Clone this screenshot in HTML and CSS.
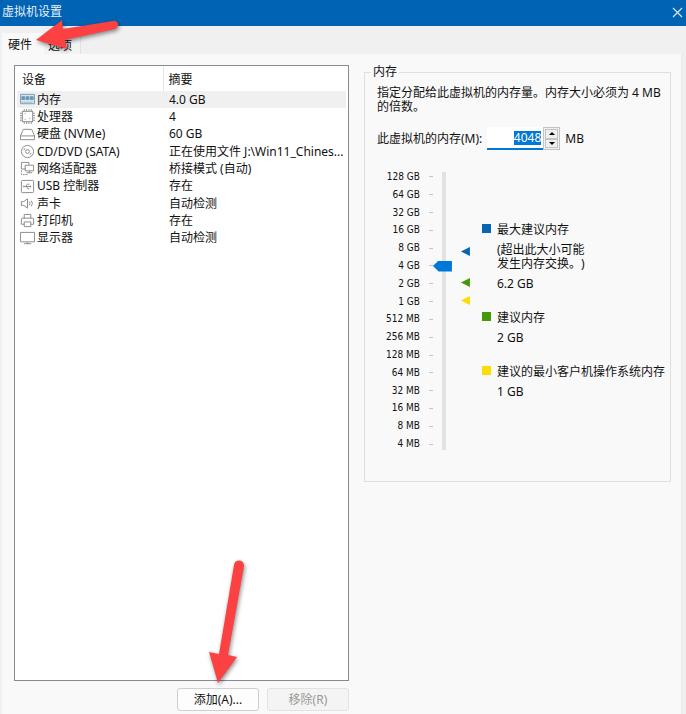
FILE: index.html
```
<!DOCTYPE html>
<html lang="zh-CN">

<head>
    <meta charset="UTF-8">
    <meta name="viewport" content="width=device-width, initial-scale=1.0">
    <title>虚拟机设置</title>
    <link rel="stylesheet" href="styles.css">
</head>

<body>
    <header class="titlebar">
        <h1>虚拟机设置</h1>
        <button class="close" type="button" aria-label="关闭">
            <svg width="11" height="11" viewBox="0 0 11 11"><path d="M1 1l9 9M10 1l-9 9" stroke="#d5e6f5" stroke-width="1.2" fill="none"/></svg>
        </button>
    </header>

    <div class="tabs">
        <button class="tab active" type="button">硬件</button>
        <button class="tab" type="button">选项</button>
        <svg class="arrow arrow-tab" width="90" height="40" viewBox="0 0 90 40">
            <path d="M5 21L31 1L32 10L82 2A4 4 0 0 1 84 10L34 21L36 30Z" fill="#fb4141"/>
        </svg>
    </div>

    <main class="panel">
        <section class="hardware">
            <div class="device-list">
                <table>
                    <thead>
                        <tr><th class="col-device">设备</th><th>摘要</th></tr>
                    </thead>
                    <tbody>
                        <tr class="selected">
                            <td><span class="device"><svg class="icon" viewBox="0 0 16 16"><path d="M.5 2.500h15v10H.5z" fill="#d3e4ef" stroke="#7b9bb0"/><path d="M2 5h3v3H2zM6.500 5h3v3h-3zM11 5h3v3h-3z" fill="#6a95b5" stroke="#6a95b5"/><path d="M2 11h12" stroke="#7b9bb0" stroke-dasharray="1 1"/></svg>内存</span></td>
                            <td>4.0 GB</td>
                        </tr>
                        <tr>
                            <td><span class="device"><svg class="icon" viewBox="0 0 16 16"><rect x="2.500" y="2.500" width="11" height="11"/><path d="M4.500 0v2M7 0v2M9.500 0v2M12 0v2M4.500 14v2M7 14v2M9.500 14v2M12 14v2M0 4.500h2M0 7h2M0 9.500h2M0 12h2M14 4.500h2M14 7h2M14 9.500h2M14 12h2"/><path d="M5 5h1M10 10h1M5 11h1"/></svg>处理器</span></td>
                            <td>4</td>
                        </tr>
                        <tr>
                            <td><span class="device"><svg class="icon" viewBox="0 0 16 16"><path d="M3.500 2.500h9l3 7v4H.5v-4zM.5 9.500h15"/></svg>硬盘 (NVMe)</span></td>
                            <td>60 GB</td>
                        </tr>
                        <tr>
                            <td><span class="device"><svg class="icon" viewBox="0 0 16 16"><circle cx="8" cy="8" r="6.500"/><circle cx="8" cy="8" r="2"/><path d="M4 6.500l1.500-2M12 9.500l-1.500 2"/></svg>CD/DVD (SATA)</span></td>
                            <td>正在使用文件 J:\Win11_Chines...</td>
                        </tr>
                        <tr>
                            <td><span class="device"><svg class="icon" viewBox="0 0 16 16"><path d="M6 8.500H1.500v-7h8V4M5.500 4.500h9v6h-9zM10 10.500v2M7 12.500h6"/><path d="M1.500 10v4.500H8" stroke-dasharray="2 1"/></svg>网络适配器</span></td>
                            <td>桥接模式 (自动)</td>
                        </tr>
                        <tr>
                            <td><span class="device"><svg class="icon" viewBox="0 0 16 16"><rect x="1.500" y="1.500" width="13" height="13" rx="1"/><path d="M4 8h8M6 8l2-2.500h2M7 8l1.500 2.500H10"/><path d="M4 7v2M11 7v2"/></svg>USB 控制器</span></td>
                            <td>存在</td>
                        </tr>
                        <tr>
                            <td><span class="device"><svg class="icon" viewBox="0 0 16 16"><path d="M1.500 6v4h2.500L8 13V3L4 6zM10 6q1.500 2 0 4M12 5q2.500 3 0 6"/></svg>声卡</span></td>
                            <td>自动检测</td>
                        </tr>
                        <tr>
                            <td><span class="device"><svg class="icon" viewBox="0 0 16 16"><path d="M4.500 6V1.500h7V6M4.500 12H1.500V6.500q0-1 1-1h11q1 0 1 1V12h-3M4.500 9.500h7v5h-7z"/></svg>打印机</span></td>
                            <td>存在</td>
                        </tr>
                        <tr>
                            <td><span class="device"><svg class="icon" viewBox="0 0 16 16"><path d="M.5 1.500h15v10H.5zM8 12v2M4 13.500h8"/></svg>显示器</span></td>
                            <td>自动检测</td>
                        </tr>
                    </tbody>
                </table>
            </div>
            <div class="actions">
                <button class="btn" type="button">添加(A)...</button>
                <button class="btn" type="button" disabled>移除(R)</button>
                <svg class="arrow arrow-add" width="50" height="136" viewBox="0 0 50 136">
                    <path d="M14 127L5 96L15 98L30 9A5 5 0 0 1 40 10L24 99L33 101Z" fill="#fb4141"/>
                </svg>
            </div>
        </section>

        <fieldset class="memory">
            <legend>内存</legend>
            <p class="hint">指定分配给此虚拟机的内存量。内存大小必须为 4 MB 的倍数。</p>
            <div class="amount">
                <label for="memory-size">此虚拟机的内存(M):</label>
                <div class="spinner">
                    <input id="memory-size" type="text" value="4048">
                    <div class="spin-buttons">
                        <button type="button" aria-label="增加"><svg width="6" height="3" viewBox="0 0 6 3"><path d="M0 3l3-3 3 3z"/></svg></button>
                        <button type="button" aria-label="减少"><svg width="6" height="3" viewBox="0 0 6 3"><path d="M0 0l3 3 3-3z"/></svg></button>
                    </div>
                </div>
                <span>MB</span>
            </div>

            <div class="sizing">
                <div class="scale">
                    <ul class="ticks">
                        <li>128 GB</li>
                        <li>64 GB</li>
                        <li>32 GB</li>
                        <li>16 GB</li>
                        <li>8 GB</li>
                        <li>4 GB</li>
                        <li>2 GB</li>
                        <li>1 GB</li>
                        <li>512 MB</li>
                        <li>256 MB</li>
                        <li>128 MB</li>
                        <li>64 MB</li>
                        <li>32 MB</li>
                        <li>16 MB</li>
                        <li>8 MB</li>
                        <li>4 MB</li>
                    </ul>
                    <input class="slider" type="range" min="0" max="15" value="10" aria-label="内存">
                    <span class="marker max"></span>
                    <span class="marker recommended"></span>
                    <span class="marker min"></span>
                </div>
                <div class="suggestions">
                    <div class="suggestion max">
                        <h2>最大建议内存</h2>
                        <p class="note">(超出此大小可能<br>发生内存交换。)</p>
                        <p>6.2 GB</p>
                    </div>
                    <div class="suggestion recommended">
                        <h2>建议内存</h2>
                        <p>2 GB</p>
                    </div>
                    <div class="suggestion min">
                        <h2>建议的最小客户机操作系统内存</h2>
                        <p>1 GB</p>
                    </div>
                </div>
            </div>
        </fieldset>
    </main>

    <script>
        const memorySize = document.getElementById('memory-size');
        memorySize.focus();
        memorySize.select();
    </script>
</body>

</html>
```
FILE: styles.css
```
* {
    box-sizing: border-box;
}

body {
    margin: 0;
    min-height: 100vh;
    display: flex;
    flex-direction: column;
    background: #f0f0f0;
    color: #111;
    font-family: "Noto Sans", "Noto Sans CJK SC", sans-serif;
    font-size: 12px;
    line-height: 14px;
}

button,
input {
    font: inherit;
    color: inherit;
    margin: 0;
}

h1,
h2,
p,
ul {
    margin: 0;
    padding: 0;
    font-size: 12px;
    font-weight: normal;
}

.titlebar {
    display: flex;
    align-items: center;
    justify-content: space-between;
    height: 26px;
    padding: 0 3px 2px 2px;
    background: #0063b4;
    color: #e6f0f9;
}

.close {
    display: flex;
    padding: 0;
    border: 0;
    background: none;
}

/* Tabs */
.tabs {
    position: relative;
    display: flex;
    align-items: flex-end;
    height: 28px;
    padding-left: 2px;
}

.tab {
    height: 18px;
    padding: 2px 8px 0 4px;
    border: 0;
    border-right: 1px solid #e2e2e2;
    background: #f3f3f3;
}

.tab.active {
    height: 21px;
    padding: 2px 12px 0 6px;
    border: 0;
    background: #f9f9f9;
}

.panel {
    flex: 1;
    display: grid;
    grid-template-columns: minmax(0, 12fr) minmax(0, 11fr);
    gap: 15px;
    margin: 0 3px 0 2px;
    padding: 11px 10px 3px 12px;
    border-right: 2px solid #ececec;
    background: #f9f9f9;
}

.hardware {
    display: flex;
    flex-direction: column;
}

.device-list {
    flex: 1;
    padding: 0 2px;
    border: 1px solid #868a92;
    background: #fff;
}

.device-list table {
    width: 100%;
    height: 181px;
    table-layout: fixed;
    border-collapse: collapse;
}

.device-list th {
    height: 25px;
    padding: 2px 5px 0;
    font-weight: normal;
    text-align: left;
}

.device-list .col-device {
    width: 146px;
    border-right: 1px solid #e5e5e5;
}

.device-list td {
    padding: 0 6px;
    overflow: hidden;
    white-space: nowrap;
    text-overflow: ellipsis;
}

.device-list td:first-child {
    padding: 0 0 0 3px;
}

.device-list td:last-child {
    padding-right: 0;
}

.selected td {
    background: #f0f0f0;
}

.device {
    display: flex;
    align-items: center;
    gap: 2px;
}

.icon {
    width: 15px;
    height: 15px;
    fill: none;
    stroke: #888;
}

.actions {
    position: relative;
    display: flex;
    justify-content: flex-end;
    gap: 8px;
    padding-top: 7px;
}

.btn {
    width: 82px;
    height: 23px;
    padding: 0;
    border: 1px solid #cfcfcf;
    border-radius: 3px;
    background: #fdfdfd;
}

.btn:disabled {
    background: #f4f4f4;
    border-color: #e2e2e2;
    color: #999;
}

.arrow {
    position: absolute;
    overflow: visible;
    pointer-events: none;
    filter: drop-shadow(1px 2px 2px rgba(0, 0, 0, 0.45));
}

.arrow-tab {
    left: 31px;
    top: -7px;
}

.arrow-add {
    right: 95px;
    bottom: 19px;
}

/* Memory settings */
.memory {
    align-self: start;
    min-width: 0;
    margin: 0;
    padding: 7px 5px 28px 12px;
    border: 1px solid #dfdfdf;
}

.memory legend {
    margin-left: -6px;
    padding: 0 2px;
}

.amount {
    display: flex;
    align-items: center;
    gap: 5px;
    margin-top: 13px;
}

.spinner {
    display: flex;
    height: 23px;
}

.spinner input {
    width: 56px;
    padding: 0 2px;
    border: 0;
    border-bottom: 2px solid #0078d7;
    outline: 0;
    background: #fff;
    text-align: right;
}

.spinner input::selection {
    background: #0078d7;
    color: #fff;
}

.spin-buttons {
    display: flex;
    flex-direction: column;
    width: 17px;
    padding: 1px;
    border: 1px solid #c4c4c4;
    background: #f0f0f0;
}

.spin-buttons button {
    flex: 1;
    display: flex;
    align-items: center;
    justify-content: center;
    padding: 0;
    border: 1px solid #c4c4c4;
    background: #f0f0f0;
}

.sizing {
    display: flex;
    gap: 12px;
    margin-top: 18px;
}

.scale {
    position: relative;
    display: flex;
    flex: none;
    align-items: center;
    width: 93px;
    height: 285px;
}

.ticks {
    display: grid;
    grid-template-rows: repeat(16, 1fr);
    align-items: center;
    width: 56px;
    height: 100%;
    list-style: none;
    font-family: "DejaVu Sans Condensed", "DejaVu Sans", sans-serif;
    font-size: 10px;
}

.ticks li {
    display: flex;
    align-items: center;
    justify-content: flex-end;
    gap: 9px;
    white-space: nowrap;
}

.ticks li::after {
    content: "";
    width: 4px;
    height: 1px;
    background: #c4c4c4;
}

.slider {
    appearance: none;
    writing-mode: vertical-lr;
    direction: rtl;
    width: 19px;
    height: 278px;
    background: none;
}

.slider::-webkit-slider-runnable-track {
    width: 19px;
    height: 278px;
    background: linear-gradient(#e2e2e2, #e2e2e2) 9px 0 / 4px 100% no-repeat;
}

.slider::-webkit-slider-thumb {
    appearance: none;
    width: 19px;
    height: 11px;
    background: #0078d7;
    clip-path: polygon(0 50%, 30% 0, 100% 0, 100% 100%, 30% 100%);
}

.marker {
    position: absolute;
    right: 0;
    width: 9px;
    height: 9px;
    clip-path: polygon(0 50%, 100% 0, 100% 100%);
}

.marker.max {
    top: 79px;
}

.marker.recommended {
    top: 110px;
}

.marker.min {
    top: 128px;
}

.suggestions {
    padding-top: 55px;
    white-space: nowrap;
    text-spacing-trim: space-all;
}

.suggestion {
    padding-left: 15px;
}

.suggestion + .suggestion {
    margin-top: 20px;
}

.suggestion h2::before {
    content: "";
    float: left;
    width: 9px;
    height: 9px;
    margin: 1px 0 0 -15px;
}

.suggestion p {
    margin-top: 6px;
}

.marker.max,
.suggestion.max h2::before {
    background: #0866b1;
}

.marker.recommended,
.suggestion.recommended h2::before {
    background: #439a08;
}

.marker.min,
.suggestion.min h2::before {
    background: #fddc00;
}
```
